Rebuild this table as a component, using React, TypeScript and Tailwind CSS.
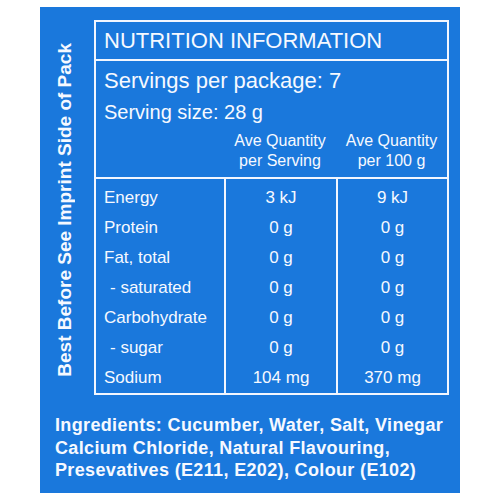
const rows = [
  { label: "Energy", serving: "3 kJ", per100: "9 kJ" },
  { label: "Protein", serving: "0 g", per100: "0 g" },
  { label: "Fat, total", serving: "0 g", per100: "0 g" },
  { label: "- saturated", serving: "0 g", per100: "0 g", sub: true },
  { label: "Carbohydrate", serving: "0 g", per100: "0 g" },
  { label: "- sugar", serving: "0 g", per100: "0 g", sub: true },
  { label: "Sodium", serving: "104 mg", per100: "370 mg" },
];

const App = () => {
  return (
    <div className="w-[500px] h-[500px] bg-white pt-[7px] pl-[40px] font-['Liberation_Sans',Arial,sans-serif] text-[#f6f9ff]">
      <div className="w-[420px] h-[486px] bg-[#1a78dc] flex flex-col">
        <div className="flex pt-[13px]">
          <div className="w-[54px] flex items-center pl-[15px] pt-1">
            <div className="[writing-mode:vertical-rl] rotate-180 text-[19px] leading-[19px] font-bold whitespace-nowrap">
              Best Before See Imprint Side of Pack
            </div>
          </div>

          <div className="w-[355px] border-2 border-[#f2f6ff]">
            <div className="h-[37px] flex items-center pl-2 text-[22px] leading-[22px]">
              NUTRITION INFORMATION
            </div>

            <div className="h-[118px] border-t-2 border-[#f2f6ff] pt-[9px]">
              <div className="pl-2 text-[22px] leading-[22px]">
                Servings per package: 7
              </div>
              <div className="pl-2 mt-[10px] text-[20px] leading-[20px]">
                Serving size: 28 g
              </div>
              <div className="grid grid-cols-[128px_112px_111px] mt-[9px] text-[16px] leading-[20px] text-center">
                <div />
                <div>
                  Ave Quantity
                  <br />
                  per Serving
                </div>
                <div>
                  Ave Quantity
                  <br />
                  per 100 g
                </div>
              </div>
            </div>

            <div className="grid grid-cols-[128px_112px_111px] border-t-2 border-[#f2f6ff] text-[17px]">
              <div className="pt-1">
                {rows.map((r) => (
                  <div
                    key={r.label}
                    className={`h-[30px] flex items-center ${r.sub ? "pl-[14px]" : "pl-2"}`}
                  >
                    {r.label}
                  </div>
                ))}
              </div>
              <div className="pt-1 border-l-2 border-[#f2f6ff]">
                {rows.map((r) => (
                  <div key={r.label} className="h-[30px] flex items-center justify-center">
                    {r.serving}
                  </div>
                ))}
              </div>
              <div className="pt-1 border-l-2 border-[#f2f6ff]">
                {rows.map((r) => (
                  <div key={r.label} className="h-[30px] flex items-center justify-center">
                    {r.per100}
                  </div>
                ))}
              </div>
            </div>
          </div>
        </div>

        <div className="mt-[19px] pl-[15px] text-[18px] leading-[22.5px] font-bold tracking-[0.35px]">
          <div>Ingredients: Cucumber, Water, Salt, Vinegar</div>
          <div>Calcium Chloride, Natural Flavouring,</div>
          <div>Presevatives (E211, E202), Colour (E102)</div>
        </div>
      </div>
    </div>
  );
};

export default App;
